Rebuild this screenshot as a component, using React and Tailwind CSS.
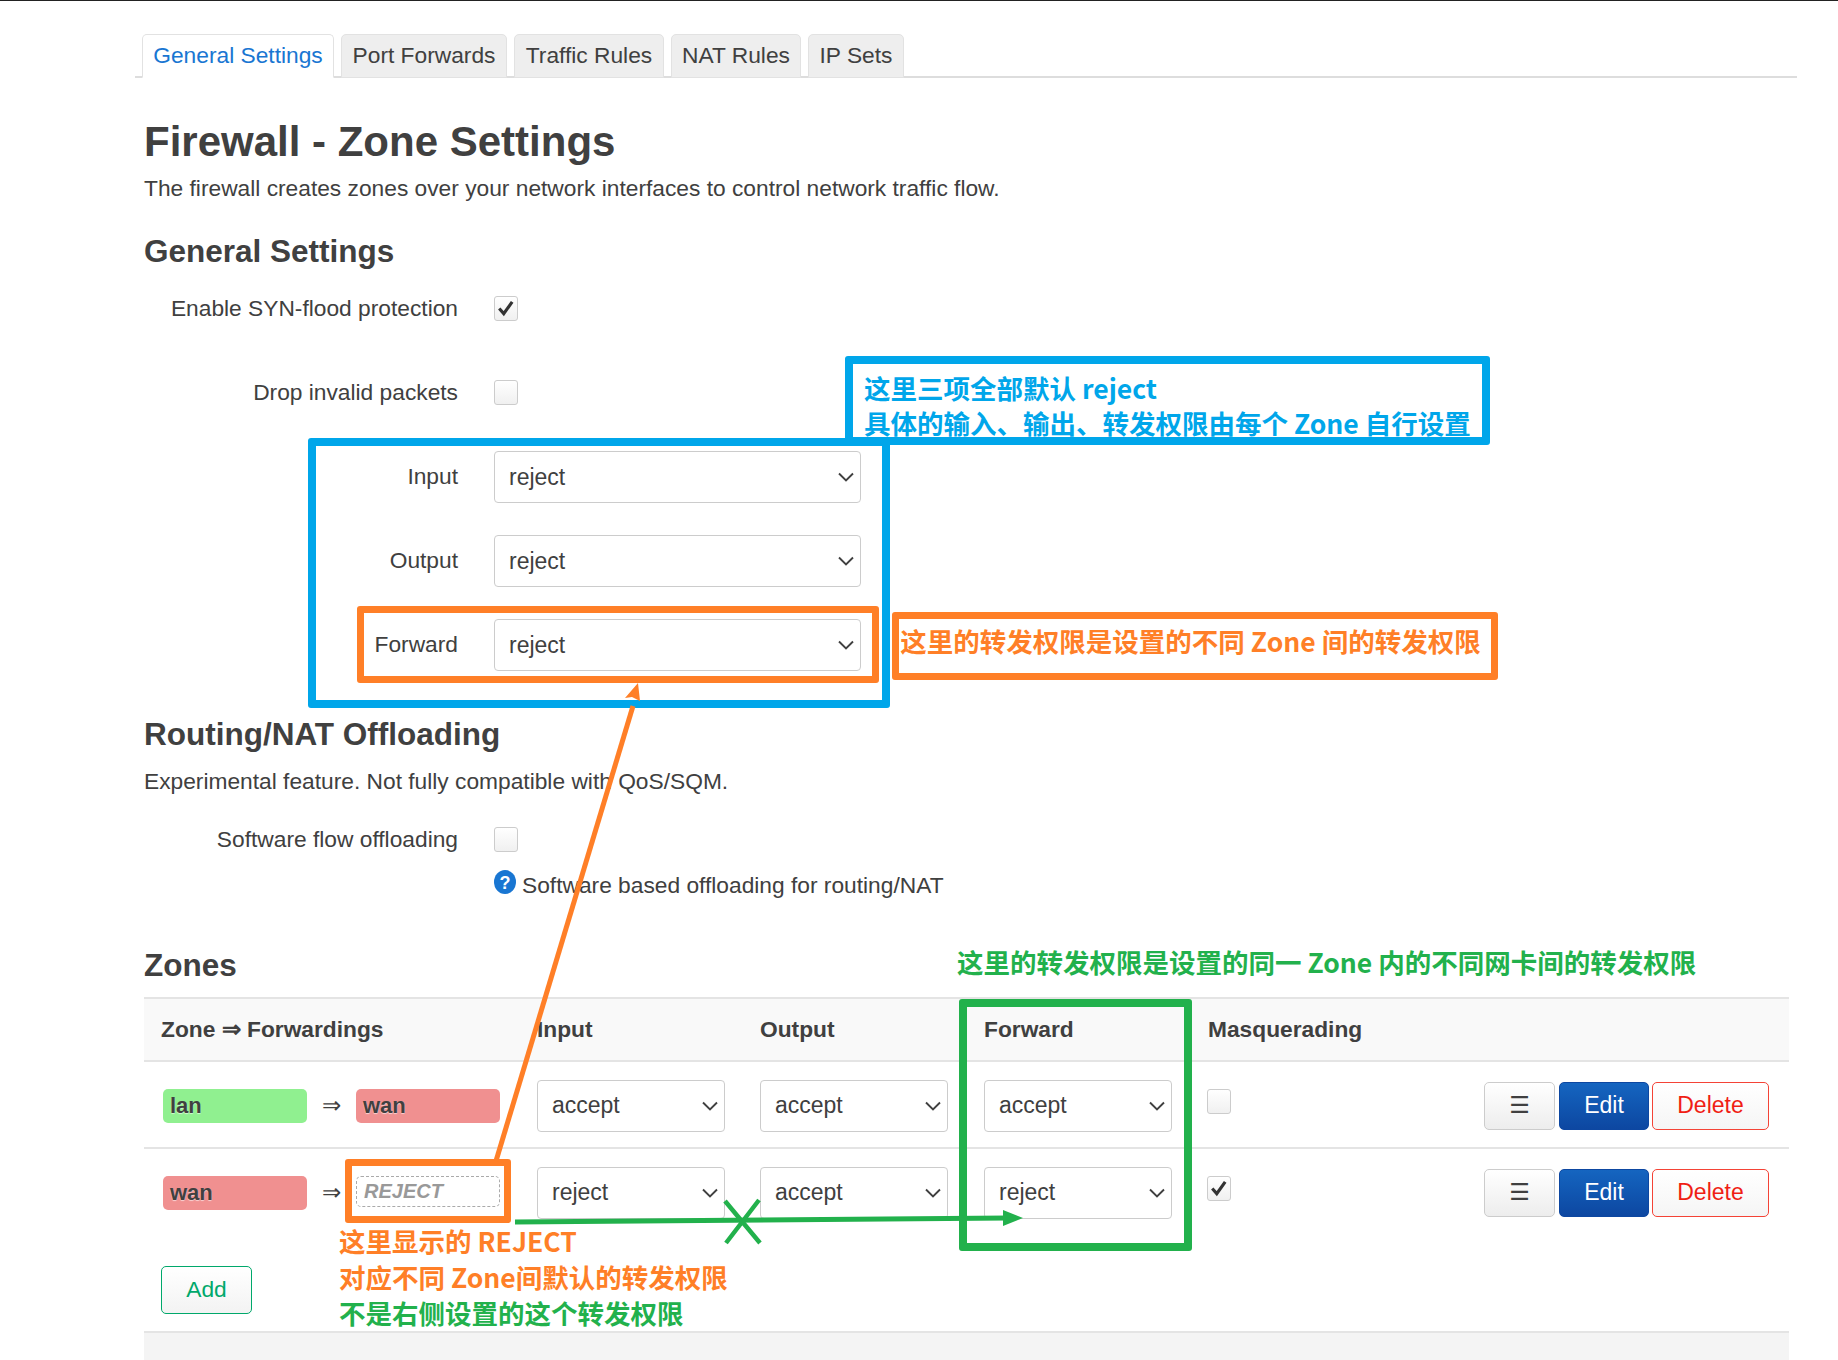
import React from "react";

const sans = "font-['Liberation_Sans',Arial,sans-serif]";
const cjk = "font-['Noto_Sans_CJK_SC','Noto_Sans',sans-serif] font-bold";

function Chevron() {
  return (
    <svg viewBox="0 0 16 10" className="absolute right-[7px] top-1/2 -mt-[5px] w-[16px] h-[10px] pointer-events-none" fill="none" stroke="#404040" strokeWidth="1.9">
      <path d="M1 1.5 L8 8.5 L15 1.5" />
    </svg>
  );
}

function Select({ value, className = "" }) {
  return (
    <div className={`relative h-[52px] ${className}`}>
      <select defaultValue={value} className="appearance-none w-full h-full rounded-[4px] border border-[#ccc] bg-white pl-[14px] text-[23px] text-[#404040] outline-none">
        <option>{value}</option>
      </select>
      <Chevron />
    </div>
  );
}

function Check({ checked, className = "" }) {
  return (
    <span className={`flex items-center justify-center w-[24px] h-[25px] rounded-[3px] border border-[#ccc] bg-gradient-to-b from-white to-[#f0f0f0] ${className}`}>
      {checked && (
        <svg viewBox="0 0 16 16" className="w-[18px] h-[18px]" fill="none" stroke="#333" strokeWidth="2.8">
          <path d="M2 8.5 L6 13 L13.5 2.5" />
        </svg>
      )}
    </span>
  );
}

function FormRow({ label, children }) {
  return (
    <div className="flex items-center h-[84px]">
      <div className="w-[458px] shrink-0 -mt-[2px] text-right text-[22.75px]">{label}</div>
      <div className="ml-[36px]">{children}</div>
    </div>
  );
}

function Pill({ children, color }) {
  return (
    <span className={`flex items-center w-[144px] h-[34px] rounded-[5px] pl-[7px] text-[22px] font-bold [text-shadow:0_1px_1px_rgba(255,255,255,0.6)] ${color}`}>
      {children}
    </span>
  );
}

function Buttons() {
  return (
    <div className="flex items-center justify-end pr-[20px] gap-[3px]">
      <button className="w-[71px] h-[48px] mr-[1px] rounded-[5px] border border-[#ccc] bg-gradient-to-b from-white to-[#ededed] text-[23px] text-[#404040] font-['DejaVu_Sans',sans-serif]">☰</button>
      <button className="w-[90px] h-[48px] rounded-[5px] border border-[#0d47a1] bg-gradient-to-b from-[#1565c0] to-[#0d47a1] text-[23px] text-white">Edit</button>
      <button className="w-[117px] h-[48px] rounded-[5px] border border-[#f44336] bg-gradient-to-b from-white to-[#f5f5f5] text-[23px] text-[#f01e14]">Delete</button>
    </div>
  );
}

const tabs = [
  ["General Settings", "w-[192px]", true],
  ["Port Forwards", "w-[166px]"],
  ["Traffic Rules", "w-[150px]"],
  ["NAT Rules", "w-[130px]"],
  ["IP Sets", "w-[96px]"],
];

const grid = "grid grid-cols-[393px_223px_224px_224px_1fr]";

export default function App() {
  return (
    <div className={`relative w-[1838px] h-[1360px] overflow-hidden bg-white text-[#404040] ${sans} border-t border-[#222]`}>
      <div className="pt-[33px] pl-[135px] pr-[41px]">
        <div className="flex h-[44px] border-b-2 border-[#ddd] pl-[7px] gap-[7px]">
          {tabs.map(([t, w, active]) => (
            <div key={t} className={`${w} h-[44px] flex items-center justify-center pb-[2px] rounded-t-[5px] border border-[#e2e2e2] text-[22.75px] ${active ? "bg-white border-b-white text-[#1976d2]" : "bg-[#eeeeee] text-[#404040]"}`}>
              {t}
            </div>
          ))}
        </div>
      </div>

      <div className="pl-[144px] pr-[49px]">
        <h1 className="mt-[40px] mb-[-1px] text-[42px] leading-[48px] font-bold">Firewall - Zone Settings</h1>
        <p className="mt-[7px] text-[22.75px] leading-[32px]">The firewall creates zones over your network interfaces to control network traffic flow.</p>
        <h2 className="mt-[32px] mb-[1px] text-[31.5px] leading-[30px] font-bold">General Settings</h2>
      </div>

      <FormRow label="Enable SYN-flood protection"><Check checked className="-mt-[2px]" /></FormRow>
      <FormRow label="Drop invalid packets"><Check className="-mt-[2px]" /></FormRow>
      <FormRow label="Input"><Select value="reject" className="w-[367px]" /></FormRow>
      <FormRow label="Output"><Select value="reject" className="w-[367px]" /></FormRow>
      <FormRow label="Forward"><Select value="reject" className="w-[367px]" /></FormRow>

      <div className="pl-[144px] pr-[49px]">
        <h2 className="mt-[32px] text-[31.5px] leading-[30px] font-bold">Routing/NAT Offloading</h2>
        <p className="mt-[17px] text-[22.75px] leading-[30px]">Experimental feature. Not fully compatible with QoS/SQM.</p>
      </div>

      <div className="mt-[24px] flex items-center h-[40px]">
        <div className="w-[458px] shrink-0 -mt-[2px] text-right text-[22.75px]">Software flow offloading</div>
        <div className="ml-[36px]"><Check className="-mt-[2px]" /></div>
      </div>

      <div className="mt-[10px] ml-[494px] flex items-center h-[30px] text-[22.75px]">
        <svg viewBox="0 0 22 24" className="w-[22px] h-[24px] -mt-[6px] mr-[6px]">
          <ellipse cx="11" cy="12" rx="11" ry="12" fill="#1976d2" />
          <text x="11" y="18.5" textAnchor="middle" fontSize="18" fontWeight="700" fill="#fff" fontFamily="Liberation Sans, sans-serif">?</text>
        </svg>
        Software based offloading for routing/NAT
      </div>

      <div className="ml-[144px] mr-[49px]">
        <h2 className="mt-[50px] text-[31.5px] leading-[30px] font-bold">Zones</h2>

        <div className="mt-[17px] border-t-2 border-[#e4e4e4]">
          <div className={`${grid} h-[63px] items-center bg-[#f9f9f9] border-b-2 border-[#e4e4e4] text-[22.75px] font-bold`}>
            <div className="pl-[17px]">Zone ⇒ Forwardings</div>
            <div>Input</div>
            <div>Output</div>
            <div>Forward</div>
            <div>Masquerading</div>
          </div>

          <div className={`${grid} h-[87px] pt-[2px] items-center border-b-2 border-[#e4e4e4]`}>
            <div className="flex items-center pl-[19px]">
              <Pill color="bg-[#90f090]">lan</Pill>
              <span className="w-[49px] text-center text-[23px]">⇒</span>
              <Pill color="bg-[#f09090]">wan</Pill>
            </div>
            <Select value="accept" className="w-[188px]" />
            <Select value="accept" className="w-[188px]" />
            <Select value="accept" className="w-[188px]" />
            <div className="flex items-center justify-between">
              <Check className="-mt-[9px] -ml-[1px]" />
              <Buttons />
            </div>
          </div>

          <div className={`${grid} h-[87px] items-center`}>
            <div className="flex items-center pl-[19px]">
              <Pill color="bg-[#f09090]">wan</Pill>
              <span className="w-[49px] text-center text-[23px]">⇒</span>
              <span className="flex items-center w-[144px] h-[31px] -mt-[3px] rounded-[5px] border border-dashed border-[#aaa] pl-[7px] text-[20px] font-bold italic text-[#999]">REJECT</span>
            </div>
            <Select value="reject" className="w-[188px]" />
            <Select value="accept" className="w-[188px]" />
            <Select value="reject" className="w-[188px]" />
            <div className="flex items-center justify-between">
              <Check checked className="-mt-[9px] -ml-[1px]" />
              <Buttons />
            </div>
          </div>

          <div className="pt-[30px] pb-[17px] pl-[17px]">
            <button className="block w-[91px] h-[48px] pb-[2px] rounded-[5px] border border-[#00a86b] bg-gradient-to-b from-white to-[#f3f3f3] text-[22.75px] text-[#00a86b]">Add</button>
          </div>

          <div className="h-[40px] border-t-2 border-[#e4e4e4] bg-[#f4f4f4]" />
        </div>
      </div>

      {/* annotations over the page */}
      <div className="absolute left-[845px] top-[355px] w-[645px] h-[89px] rounded-[3px] border-[8px] border-[#00a6ea] text-[#00a6ea] text-[26.5px] leading-[35px] pl-[11px] pt-[6px] whitespace-nowrap overflow-hidden">
        <div className={cjk}>这里三项全部默认 reject</div>
        <div className={cjk}>具体的输入、输出、转发权限由每个 Zone 自行设置</div>
      </div>
      <div className="absolute left-[308px] top-[437px] w-[582px] h-[270px] rounded-[3px] border-[8px] border-[#00a6ea]" />
      <div className="absolute left-[357px] top-[605px] w-[522px] h-[77px] rounded-[3px] border-[7px] border-[#ff7f27]" />
      <div className={`absolute left-[892px] top-[611px] w-[606px] h-[68px] rounded-[3px] border-[7px] border-[#ff7f27] text-[#ff7f27] text-[26.5px] pb-[11px] pr-[9px] flex items-center justify-center whitespace-nowrap ${cjk}`}>
        这里的转发权限是设置的不同 Zone 间的转发权限
      </div>
      <div className="absolute left-[345px] top-[1158px] w-[166px] h-[64px] rounded-[3px] border-[7px] border-[#ff7f27]" />
      <div className="absolute left-[959px] top-[998px] w-[233px] h-[252px] rounded-[3px] border-[8px] border-[#22b14c]" />
      <div className={`absolute left-[957px] top-[942px] text-[#22b14c] text-[26.5px] leading-[37px] whitespace-nowrap ${cjk}`}>
        这里的转发权限是设置的同一 Zone 内的不同网卡间的转发权限
      </div>
      <div className={`absolute left-[339px] top-[1222px] text-[26.5px] leading-[36px] whitespace-nowrap ${cjk}`}>
        <div className="text-[#ff7f27]">这里显示的 REJECT</div>
        <div className="text-[#ff7f27]">对应不同 Zone间默认的转发权限</div>
        <div className="text-[#22b14c]">不是右侧设置的这个转发权限</div>
      </div>

      <svg className="absolute left-0 top-0 w-[1838px] h-[1360px] pointer-events-none" viewBox="0 0 1838 1360" fill="none">
        <path d="M496 1160 L633 705" stroke="#ff7f27" strokeWidth="5" />
        <path d="M638 682 L625 697 L632 696 L640 700 Z" fill="#ff7f27" />
        <path d="M515 1221 L1008 1217" stroke="#22b14c" strokeWidth="5" />
        <path d="M1003 1209 L1023 1217 L1003 1225 Z" fill="#22b14c" />
        <path d="M726 1242 L759 1199 M725 1200 L760 1242" stroke="#22b14c" strokeWidth="4.5" />
      </svg>
    </div>
  );
}
